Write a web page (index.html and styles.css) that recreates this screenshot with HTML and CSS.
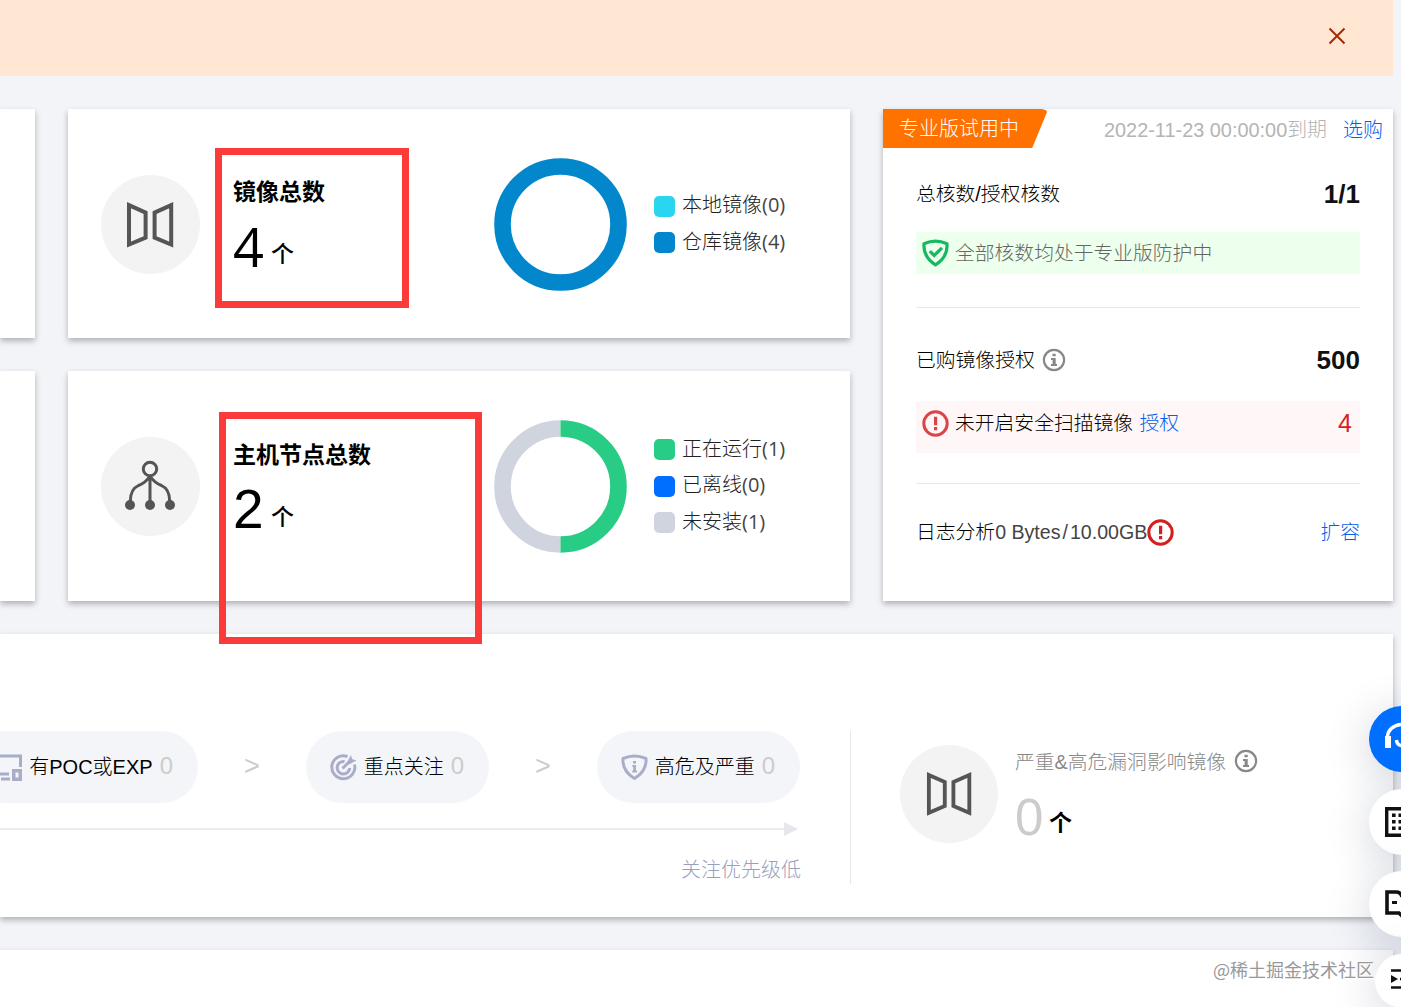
FILE: index.html
```html
<!DOCTYPE html>
<html lang="zh-CN">
<head>
  <meta charset="UTF-8">
  <meta name="viewport" content="width=device-width, initial-scale=1.0">
  <title>容器安全概览</title>
  <link rel="stylesheet" href="styles.css">
</head>
<body>
  <svg class="defs" width="0" height="0">
    <symbol id="icon-door" viewBox="0 0 48 48">
      <path d="M3 4.2L19.6 11.6V36.6L3 43.6ZM45.2 4.2L28.6 11.6V36.6L45.2 43.6Z" fill="none" stroke="#555" stroke-width="4"/>
    </symbol>
    <symbol id="icon-info" viewBox="0 0 24 24">
      <circle cx="12" cy="12" r="10.1" fill="none" stroke="currentColor" stroke-width="2.2"/>
      <path d="M10.5 5.7h3.2v2.6h-3.2zM9 10h4.7v6H15v2H9v-2h1.6v-4H9z" fill="currentColor"/>
    </symbol>
    <symbol id="icon-warn" viewBox="0 0 27 27">
      <circle cx="13.5" cy="13.5" r="11.7" fill="none" stroke="currentColor" stroke-width="3"/>
      <path d="M12 6.8h3.2v8.4H12zM12 17h3.2v3.2H12z" fill="currentColor"/>
    </symbol>
  </svg>

  <div class="notice">
    <svg class="close" viewBox="0 0 18 18"><path d="M1.5 1.5L16.5 16.5M16.5 1.5L1.5 16.5" stroke="#a82a04" stroke-width="2"/></svg>
  </div>

  <div class="overview">
    <div class="card side"></div>
    <div class="card stat stat-image">
      <div class="circle"><svg width="48" height="48"><use href="#icon-door"/></svg></div>
      <div class="total">
        <div class="total-title">镜像总数</div>
        <div class="total-num"><span class="num num-image">4</span><span class="unit">个</span></div>
        <div class="mark mark-image"></div>
      </div>
      <svg class="donut" viewBox="0 0 133 133"><circle cx="66.5" cy="66.5" r="58" fill="none" stroke="#0287cd" stroke-width="16.6"/></svg>
      <ul class="legend">
        <li><i class="dot cyan"></i>本地镜像<span>(0)</span></li>
        <li><i class="dot deep"></i>仓库镜像<span>(4)</span></li>
      </ul>
    </div>

    <div class="card license">
      <div class="license-head">
        <span class="tag">专业版试用中</span>
        <span class="expire">2022-11-23 00:00:00到期</span>
        <a class="link">选购</a>
      </div>
      <div class="license-body">
        <div class="row"><span class="label">总核数/授权核数</span><b>1/1</b></div>
        <div class="bar bar-ok">
          <svg width="27" height="28" viewBox="0 0 27 28">
            <path d="M13.5 2.2Q19 2.2 25 4.8Q26 18 13.5 25.8Q1 18 2 4.8Q8 2.2 13.5 2.2Z" fill="none" stroke="#18b860" stroke-width="3.2" stroke-linejoin="round"/>
            <path d="M7.8 12.2L12.2 16.5L20 8.8" fill="none" stroke="#18b860" stroke-width="3.2"/>
          </svg>
          <span class="bar-text">全部核数均处于专业版防护中</span>
        </div>
        <div class="row row-line"><span class="with-icon"><span class="label">已购镜像授权</span> <svg class="info" width="24" height="24"><use href="#icon-info"/></svg></span><b>500</b></div>
        <div class="bar bar-warn">
          <svg width="27" height="27"><use href="#icon-warn"/></svg>
          <span class="bar-text">未开启安全扫描镜像 <a class="link">授权</a></span>
          <span class="count">4</span>
        </div>
        <div class="row row-line row-log"><span class="with-icon"><span class="label">日志分析</span><span class="usage">0 Bytes<i>/</i>10.00GB</span><svg class="danger" width="27" height="27"><use href="#icon-warn"/></svg></span><a class="link label">扩容</a></div>
      </div>
    </div>

    <div class="card side"></div>
    <div class="card stat stat-node">
      <div class="circle">
        <svg width="52" height="54" viewBox="0 0 52 54">
          <g fill="none" stroke="#555" stroke-width="3">
            <circle cx="26" cy="10" r="6.7"/>
            <path d="M26 17V45M26 17Q22 23.5 14.5 26.5Q6.5 30 6.3 42M26 17Q30 23.5 37.5 26.5Q45.5 30 45.7 42"/>
          </g>
          <g fill="#555"><circle cx="6" cy="46" r="5"/><circle cx="26" cy="46" r="5"/><circle cx="46" cy="46" r="5"/></g>
        </svg>
      </div>
      <div class="total">
        <div class="total-title">主机节点总数</div>
        <div class="total-num"><span class="num">2</span><span class="unit">个</span></div>
        <div class="mark mark-node"></div>
      </div>
      <svg class="donut" viewBox="0 0 133 133">
        <path d="M66.5 8.5A58 58 0 0 0 66.5 124.5" fill="none" stroke="#d0d4de" stroke-width="16.6"/>
        <path d="M66.5 8.5A58 58 0 0 1 66.5 124.5" fill="none" stroke="#29cc85" stroke-width="16.6"/>
      </svg>
      <ul class="legend">
        <li><i class="dot green"></i>正在运行<span>(1)</span></li>
        <li><i class="dot blue"></i>已离线<span>(0)</span></li>
        <li><i class="dot gray"></i>未安装<span>(1)</span></li>
      </ul>
    </div>
  </div>

  <div class="card vuln">
    <div class="funnel">
      <div class="steps">
        <div class="pill pill-poc">
          <svg width="27" height="27" viewBox="0 0 27 27">
            <path d="M14 20H1.5V2H25.5V13" fill="none" stroke="#a9aec8" stroke-width="3"/>
            <path d="M6 23.5H15V26.5H6ZM17 15H27V27H17ZM20.5 18.5V23.5H23.5V18.5Z" fill="#a9aec8" fill-rule="evenodd"/>
          </svg>
          <span>有POC或EXP</span><em>0</em>
        </div>
        <span class="next">&gt;</span>
        <div class="pill pill-focus">
          <svg width="27" height="27" viewBox="0 0 27 27">
            <path d="M17.5 2.5A11.5 11.5 0 1 0 24.5 10.5M14.5 7.5A6.3 6.3 0 1 0 19.7 14M12.5 14.5L20 7" fill="none" stroke="#a9aec8" stroke-width="3"/>
            <path d="M17 8.5L21 1L22 5L26.5 6.5L19 10.5Z" fill="#a9aec8"/>
          </svg>
          <span>重点关注</span><em>0</em>
        </div>
        <span class="next">&gt;</span>
        <div class="pill pill-high">
          <svg width="27" height="27" viewBox="0 0 27 27">
            <path d="M13.5 2Q19 2 25 4.5Q26 17 13.5 24.5Q1 17 2 4.5Q8 2 13.5 2Z" fill="none" stroke="#a9aec8" stroke-width="3" stroke-linejoin="round"/>
            <path d="M12 7h3v2.6h-3zM11.3 11h3.7v5.5h1v2h-4.7v-2h.9v-3.5h-.9z" fill="#a9aec8"/>
          </svg>
          <span>高危及严重</span><em>0</em>
        </div>
      </div>
      <div class="axis"></div>
      <div class="axis-label">关注优先级低</div>
    </div>
    <div class="impact">
      <div class="circle"><svg width="46" height="46"><use href="#icon-door"/></svg></div>
      <div>
        <div class="impact-title">严重&amp;高危漏洞影响镜像 <svg class="info" width="24" height="24"><use href="#icon-info"/></svg></div>
        <div class="total-num"><span class="num num-zero">0</span><span class="unit">个</span></div>
      </div>
    </div>
  </div>

  <div class="card tail"></div>

  <div class="fabs">
    <div class="fab fab-blue">
      <svg width="34" height="34" viewBox="0 0 34 34">
        <path d="M2.5 18V15A14.5 12.5 0 0 1 31.500 15V18M11.5 18Q12 23.5 17 23.5Q22 23.5 22.5 18" fill="none" stroke="#fff" stroke-width="3.4"/>
        <path d="M0 14H6V26H0ZM28 14H34V26H28Z" fill="#fff"/>
      </svg>
    </div>
    <div class="fab">
      <svg width="34" height="30" viewBox="0 0 34 30">
        <path d="M1.7 1.7H32.3V28.3H1.7Z" fill="none" stroke="#111" stroke-width="3.4"/>
        <path d="M7 6.5h3.6v3.6H7zM13.5 6.5h3.6v3.6h-3.6zM20 6.5h3.6v3.6H20zM7 13h3.6v3.6H7zM13.5 13h3.6v3.6h-3.6zM20 13h3.6v3.6H20zM7 19.5h3.6v3.6H7zM13.5 19.5h3.6v3.6h-3.6zM20 19.5h3.6v3.6H20z" fill="#111"/>
      </svg>
    </div>
    <div class="fab">
      <svg width="34" height="28" viewBox="0 0 34 28">
        <path d="M2 2H11Q16 2 17 7Q18 2 23 2H32V23H20L17 26L14 23H2Z" fill="none" stroke="#111" stroke-width="3.6"/>
        <path d="M7 11h5v3H7zM22 11h5v3h-5z" fill="#111"/>
      </svg>
    </div>
    <div class="fab fab-small">
      <svg width="22" height="20" viewBox="0 0 22 20">
        <path d="M0 1.5H22M0 18.5H22M9 10H12M15 10H22" stroke="#111" stroke-width="2.6"/>
        <path d="M0 6L7 10L0 14Z" fill="#111"/>
      </svg>
    </div>
  </div>
  <div class="watermark">@稀土掘金技术社区</div>
</body>
</html>
```

FILE: styles.css
```css
* {
  box-sizing: border-box;
}
body {
  margin: 0;
  height: 1007px;
  position: relative;
  overflow: hidden;
  background-color: #f2f4f8;
  color: #000;
  font-family: "Liberation Sans", "Noto Sans CJK SC", sans-serif;
  font-size: 20px;
  font-weight: 300;
}
svg {
  display: block;
  flex: none;
}
.defs {
  position: absolute;
}
.notice {
  width: 1393px;
  height: 76px;
  padding: 27px 47px 0 0;
  display: flex;
  justify-content: flex-end;
  background-color: #ffe7d4;
}
.close {
  width: 18px;
  height: 18px;
}
.card {
  background-color: #fff;
  box-shadow: 0 3px 6px rgba(0, 0, 0, 0.28);
}
.link {
  color: #005fee;
}

/* top cards */
.overview {
  display: grid;
  grid-template-columns: 35px 782px 510px;
  grid-template-rows: 229px 230px;
  gap: 33px;
  width: 1393px;
  margin-top: 33px;
}
.stat {
  display: flex;
  align-items: center;
  padding-left: 33px;
}
.stat-image {
  padding-top: 2px;
}
.circle {
  width: 99px;
  height: 99px;
  flex: none;
  border-radius: 50%;
  background-color: #f3f3f3;
  display: flex;
  align-items: center;
  justify-content: center;
}
.stat .circle svg {
  margin-right: 1px;
}
.total {
  position: relative;
  width: 261px;
  height: 100px;
  margin-left: 33px;
}
.total-title {
  font-size: 23px;
  font-weight: 700;
  line-height: 34px;
}
.stat-node .total-title {
  padding-top: 2px;
}
.total-num {
  display: flex;
  line-height: 76px;
}
.stat .total-num {
  margin-top: -1px;
}
.num {
  width: 38px;
  font-size: 55px;
  font-weight: 400;
}
.num-image {
  font-family: "Open Sans", sans-serif;
  font-size: 54px;
}
.unit {
  padding-top: 8px;
  font-size: 23px;
  font-weight: 500;
}
.mark {
  position: absolute;
  border: 7px solid #fb3a3a;
}
.mark-image {
  left: -18px;
  top: -27px;
  width: 194px;
  height: 160px;
}
.mark-node {
  left: -14px;
  top: -24px;
  width: 263px;
  height: 232px;
  z-index: 2;
}
.donut {
  width: 133px;
  height: 133px;
}
.legend {
  list-style: none;
  margin: 0 0 0 27px;
  padding: 0;
  font-family: "Open Sans", "Noto Sans CJK SC", sans-serif;
  line-height: 26px;
  color: #222;
}
.legend li {
  display: flex;
  align-items: center;
  height: 36.5px;
  padding-bottom: 2px;
}
.legend span {
  font-weight: 400;
  color: #444;
}
.dot {
  width: 21px;
  height: 21px;
  position: relative;
  top: 1px;
  margin-right: 7px;
  border-radius: 5px;
}
.cyan { background-color: #2ad5ef; }
.deep { background-color: #0287cd; }
.green { background-color: #29cc85; }
.blue { background-color: #006eff; }
.gray { background-color: #d0d4de; }

/* license card */
.license {
  grid-column: 3;
  grid-row: 1 / 3;
}
.license-head {
  display: flex;
  align-items: center;
  height: 39px;
  padding-right: 10px;
}
.tag {
  width: 164px;
  height: 39px;
  padding-left: 16px;
  line-height: 40px;
  color: #fff;
  background-color: #ff7200;
  clip-path: polygon(0 0, 97% 0, 99.5% 3%, 100% 8%, 91% 100%, 0 100%);
}
.expire {
  margin: 0 16px 0 auto;
  padding-bottom: 1px;
  font-size: 19.9px;
  color: #b4b4b4;
}
.license-body {
  padding: 27px 33px 0;
  font-size: 19.8px;
}
.row {
  display: flex;
  align-items: center;
  justify-content: space-between;
  height: 38px;
}
.row b {
  font-size: 26px;
  font-weight: 700;
  color: #111;
}
.row-line {
  height: 72px;
  padding-top: 33px;
  margin-top: 33px;
  border-top: 1px solid #e8e8e8;
}
.row-log {
  margin-top: 30px;
  height: 68px;
  padding-top: 29px;
}
.label {
  padding-bottom: 3px;
}
.with-icon {
  display: flex;
  align-items: center;
}
.info {
  margin-left: 7px;
  color: #888;
}
.bar {
  display: flex;
  align-items: center;
  padding: 0 8px 0 6px;
}
.bar svg {
  margin-right: 6px;
}
.bar-ok {
  height: 42px;
  margin-top: 19px;
  background-color: #edffed;
  color: #666;
}
.bar-text {
  padding-bottom: 4px;
}
.bar-warn {
  height: 52px;
  margin-top: 22px;
  padding-bottom: 7px;
  background-color: #fff7f7;
}
.bar-warn .link {
  margin-left: 1px;
}
.bar-warn svg {
  color: #dc4545;
}
.bar-warn .count {
  margin-left: auto;
  color: #d42222;
  font-size: 25px;
}
.usage {
  font-size: 19.6px;
  color: #444;
}
.usage i {
  font-style: normal;
  margin: 0 2px;
}
.danger {
  color: #d41f1f;
}

/* vulnerability panel */
.vuln {
  display: flex;
  width: 1393px;
  height: 283px;
  margin-top: 33px;
  padding-top: 97px;
}
.funnel {
  width: 851px;
  height: 153px;
  border-right: 1px solid #e6e6e6;
}
.steps {
  display: flex;
  align-items: center;
  margin-left: -30px;
}
.pill {
  display: flex;
  align-items: center;
  justify-content: flex-end;
  flex: none;
  height: 72px;
  padding-right: 25px;
  border-radius: 36px;
  background-color: #f3f5f9;
}
.pill svg {
  margin-right: 7px;
}
.pill span {
  padding-bottom: 4px;
}
.pill em {
  margin-left: 7px;
  padding-bottom: 2px;
  font-style: normal;
  font-size: 24px;
  color: #ccc;
}
.pill-poc { width: 228px; }
.pill-focus { width: 183px; }
.pill-high { width: 203px; }
.next {
  width: 108px;
  flex: none;
  padding-bottom: 2px;
  text-align: center;
  font-size: 27px;
  font-weight: 400;
  color: #ccc;
}
.axis {
  position: relative;
  width: 786px;
  height: 2px;
  margin-top: 25px;
  background-color: #ebebeb;
}
.axis::after {
  content: "";
  position: absolute;
  right: -12px;
  top: -6px;
  border: 7px solid transparent;
  border-left: 14px solid #e6e7ea;
  border-right: 0;
}
.axis-label {
  width: 801px;
  margin-top: 25px;
  text-align: right;
  line-height: 30px;
  color: #999fbe;
}
.impact {
  display: flex;
  padding: 14px 0 0 49px;
}
.impact .circle {
  width: 98px;
  height: 98px;
  margin-right: 17px;
}
.impact-title {
  display: flex;
  align-items: center;
  height: 31px;
  font-size: 19.8px;
  color: #888;
}
.impact-title .info {
  margin-left: 8px;
}
.impact .total-num {
  line-height: 83px;
}
.num-zero {
  width: 34px;
  font-size: 51px;
  color: #ccc;
}
.impact .unit {
  padding-top: 6px;
  font-weight: 700;
}
.tail {
  width: 1393px;
  height: 100px;
  margin-top: 33px;
}

/* floating buttons */
.fabs {
  position: absolute;
  left: 1369px;
  top: 706px;
  display: flex;
  flex-direction: column;
  align-items: center;
  gap: 16.5px;
  z-index: 3;
}
.fab {
  width: 66px;
  height: 66px;
  display: flex;
  align-items: center;
  justify-content: center;
  border-radius: 50%;
  background-color: #fff;
  box-shadow: 0 8px 44px rgba(35, 50, 85, 0.22);
}
.fab-blue {
  background-color: #006eff;
}
.fab-small {
  width: 54px;
  height: 54px;
}
.fab-small svg {
  margin-bottom: 4px;
}
.watermark {
  position: absolute;
  right: 27px;
  bottom: 23px;
  font-family: "Noto Sans CJK SC", sans-serif;
  font-size: 18px;
  font-weight: 400;
  line-height: 30px;
  color: #999;
  text-shadow: 1px 1px 0 #fff;
  z-index: 4;
}
```
